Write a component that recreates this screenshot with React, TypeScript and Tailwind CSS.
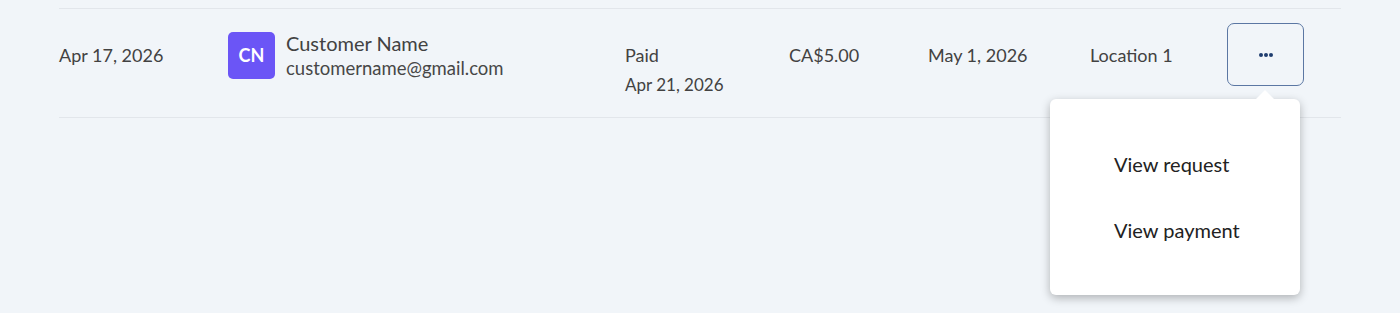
import React from "react";

export default function App() {
  return (
    <div className="w-[1400px] h-[313px] bg-[#f1f5f9] overflow-hidden" style={{ fontFamily: "Lato, 'Open Sans', sans-serif" }}>
      <div className="pt-[8px] px-[59px]">
        <div className="border-t border-b border-[#e2e6eb] h-[110px] flex items-start pt-[14px] text-[#424242]">
          <div className="w-[169px] mt-[20px] text-[18px] leading-[24px]">Apr 17, 2026</div>
          <div className="w-[397px] flex items-start mt-[9px]">
            <div className="w-[47px] h-[47px] rounded-[5px] bg-[#6b55f6] text-white flex items-center justify-center text-[18px] font-bold">CN</div>
            <div className="ml-[11px] -mt-[1px]">
              <div className="text-[20px] leading-[24px]">Customer Name</div>
              <div className="text-[18.5px] leading-[24px] mt-[1px] text-[#474747]">customername@gmail.com</div>
            </div>
          </div>
          <div className="w-[164px] mt-[20px]">
            <div className="text-[18px] leading-[24px]">Paid</div>
            <div className="text-[17px] leading-[24px] mt-[6px]">Apr 21, 2026</div>
          </div>
          <div className="w-[139px] mt-[20px] text-[18px] leading-[24px]">CA$5.00</div>
          <div className="w-[162px] mt-[20px] text-[18px] leading-[24px]">May 1, 2026</div>
          <div className="w-[137px] mt-[20px] text-[18px] leading-[24px]">Location 1</div>
          <div className="relative">
            <button className="w-[77px] h-[63px] rounded-[7px] border border-[#5b77a3] flex items-center justify-center gap-[1px]">
              <span className="w-[4px] h-[4px] rounded-full bg-[#1f3d6f]" />
              <span className="w-[4px] h-[4px] rounded-full bg-[#1f3d6f]" />
              <span className="w-[4px] h-[4px] rounded-full bg-[#1f3d6f]" />
            </button>
            <div className="absolute left-[-177px] top-[76px] w-[250px] h-[196px] bg-white rounded-[6px] shadow-[0_3px_10px_rgba(0,0,0,0.28)] z-10">
              <div className="absolute left-[205px] top-[-9px] w-0 h-0 border-l-[10px] border-r-[10px] border-b-[10px] border-l-transparent border-r-transparent border-b-white" />
              <div className="pl-[64px] pt-[53px] text-[20px] text-[#222] leading-[24px]">
                <div>View request</div>
                <div className="mt-[42px]">View payment</div>
              </div>
            </div>
          </div>
        </div>
      </div>
    </div>
  );
}
